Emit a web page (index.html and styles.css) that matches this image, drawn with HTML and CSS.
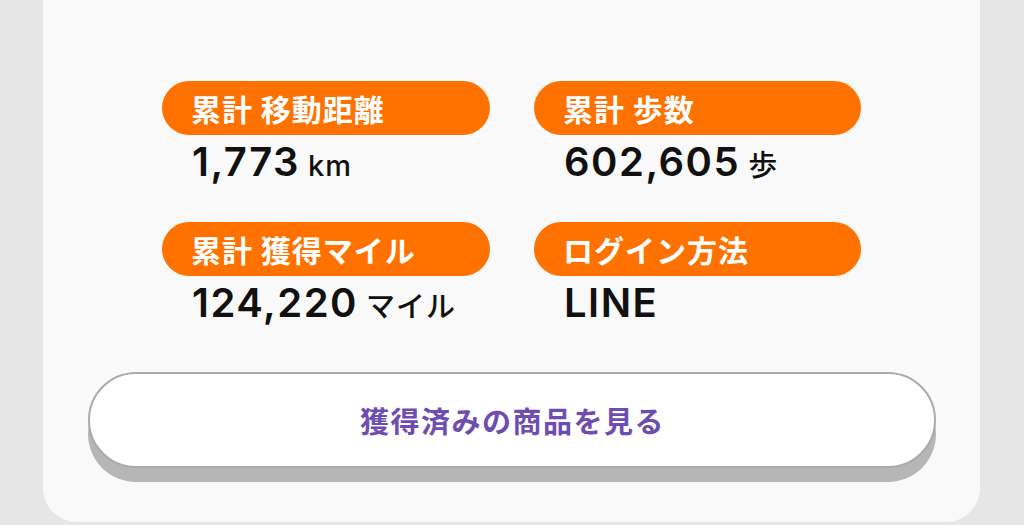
FILE: index.html
```html
<!DOCTYPE html>
<html lang="ja">
<head>
    <meta charset="UTF-8">
    <meta name="viewport" content="width=device-width, initial-scale=1.0">
    <title>マイページ</title>
    <link rel="stylesheet" href="styles.css">
</head>
<body>
<!-- 実績カード -->
<main class="card">
    <section class="stats">
        <div class="stat">
            <h2 class="stat-label">累計 移動距離</h2>
            <p class="stat-value">1,773<span class="unit">km</span></p>
        </div>
        <div class="stat">
            <h2 class="stat-label">累計 歩数</h2>
            <p class="stat-value">602,605<span class="unit">歩</span></p>
        </div>
        <div class="stat">
            <h2 class="stat-label">累計 獲得マイル</h2>
            <p class="stat-value">124,220<span class="unit">マイル</span></p>
        </div>
        <div class="stat">
            <h2 class="stat-label">ログイン方法</h2>
            <p class="stat-value">LINE</p>
        </div>
    </section>
    <!-- ボタン -->
    <button class="btn-history">獲得済みの商品を見る</button>
</main>
</body>
</html>
```

FILE: styles.css
```css
* { margin: 0; padding: 0; box-sizing: border-box; }
html, body { width: 100%; height: 100%; }
button { outline: none; border: none; background: none; cursor: pointer; }

body {
    background: #e6e6e6;
    font-family: "Noto Sans CJK JP", "Noto Sans", sans-serif;
    color: #111;
    overflow: hidden;
}

/* カード */
.card {
    width: 937px;
    height: 522px;
    margin-left: 43px;
    padding-top: 81px;
    background: #f9f9f9;
    border-radius: 0 0 34px 34px;
    display: flex;
    flex-direction: column;
    align-items: center;
}

/* 実績 */
.stats {
    width: 699px;
    display: grid;
    grid-template-columns: 328px 327px;
    column-gap: 44px;
    row-gap: 35px;
}
.stat-label {
    height: 54px;
    line-height: 54px;
    padding-left: 29px;
    border-radius: 27px;
    background: #ff7200;
    color: #fff;
    font-size: 30px;
    font-weight: 700;
    letter-spacing: 1px;
}
.stat-value {
    margin-top: 2px;
    padding-left: 30px;
    height: 50px;
    line-height: 50px;
    font-family: "Inter", "Noto Sans CJK JP", sans-serif;
    font-size: 40px;
    font-weight: 600;
    letter-spacing: 1.5px;
    white-space: nowrap;
}
.stat-value > .unit {
    margin-left: 8px;
    font-size: 29px;
    font-weight: 500;
    letter-spacing: 1px;
}

/* ボタン */
.btn-history {
    width: 848px;
    height: 96px;
    margin-top: 44px;
    border: 2px solid #ababab;
    border-radius: 48px;
    background: #fff;
    box-shadow: 0 14px 0 #b6b6b6;
    color: #6e4cb0;
    font-family: "Noto Sans CJK JP", sans-serif;
    font-size: 29px;
    font-weight: 700;
    letter-spacing: 1.5px;
    text-indent: 2px;
}
```
